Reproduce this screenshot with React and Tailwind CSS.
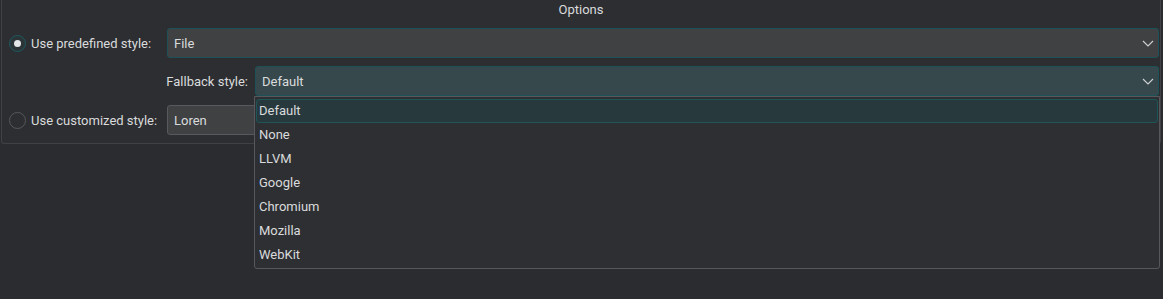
import React from "react";

const items = ["Default", "None", "LLVM", "Google", "Chromium", "Mozilla", "WebKit"];

function Chevron() {
  return (
    <svg width="12" height="7" viewBox="0 0 12 7" className="shrink-0">
      <path d="M1 1 L6 6 L11 1" fill="none" stroke="#cfd1d3" strokeWidth="1.1" />
    </svg>
  );
}

function Radio({ checked }) {
  return checked ? (
    <span className="w-[17px] h-[17px] rounded-full border border-[#1d5a60] bg-[#2b3538] flex items-center justify-center">
      <span className="w-[7px] h-[7px] rounded-full bg-[#e4e6e8]" />
    </span>
  ) : (
    <span className="w-[17px] h-[17px] rounded-full border border-[#56585b]" />
  );
}

export default function App() {
  return (
    <div
      className="relative w-[1163px] h-[299px] bg-[#2b2c2f] text-[13px] text-[#d9dbdd] overflow-hidden"
      style={{ fontFamily: 'Roboto, "Noto Sans", sans-serif' }}
    >
      {/* group box */}
      <div className="ml-[1px] w-[1160px] h-[144px] bg-[#2d2e31] border-l border-r border-b border-[#404144] rounded-b-[3px]">
        <div className="h-[18px] flex items-center justify-center leading-none">Options</div>

        <div className="mt-[10px] flex items-center h-[30px]">
          <div className="w-[165px] flex items-center pl-[7px] gap-[5px]">
            <Radio checked />
            <span className="pt-[1px]">Use predefined style:</span>
          </div>
          <div className="w-[992px] h-[30px] rounded-[3px] bg-[#404143] border border-[#1c5257] flex items-center justify-between pl-[6px] pr-[4px]">
            <span className="pt-[2px]">File</span>
            <Chevron />
          </div>
        </div>

        <div className="mt-[8px] flex items-center h-[30px]">
          <div className="w-[253px] flex justify-end pr-[7px] pt-[2px]">Fallback style:</div>
          <div className="w-[904px] h-[30px] rounded-[3px] bg-[#36484b] border border-[#1c5257] flex items-center justify-between pl-[6px] pr-[4px]">
            <span className="pt-[2px]">Default</span>
            <Chevron />
          </div>
        </div>

        <div className="mt-[9px] flex items-center h-[30px]">
          <div className="w-[165px] flex items-center pl-[7px] gap-[5px]">
            <Radio />
            <span className="pt-[1px]">Use customized style:</span>
          </div>
          <div className="w-[992px] h-[30px] rounded-[3px] bg-[#404143] border border-[#58595c] flex items-center pl-[6px]">
            <span className="pt-[2px]">Loren</span>
          </div>
        </div>
      </div>

      {/* dropdown popup */}
      <div className="absolute left-[254px] top-[96px] w-[906px] h-[173px] bg-[#2e2f32] border border-[#56585b] rounded-b-[3px] px-[1px] pt-[1px]">
        {items.map((it, i) => (
          <div
            key={it}
            className={
              i === 0
                ? "h-[24px] mt-[1px] flex items-center pl-[2px] bg-[#28393d] border border-[#1e5559] rounded-[3px]"
                : "h-[24px] flex items-center pl-[3px]"
            }
          >
            {it}
          </div>
        ))}
      </div>
    </div>
  );
}
